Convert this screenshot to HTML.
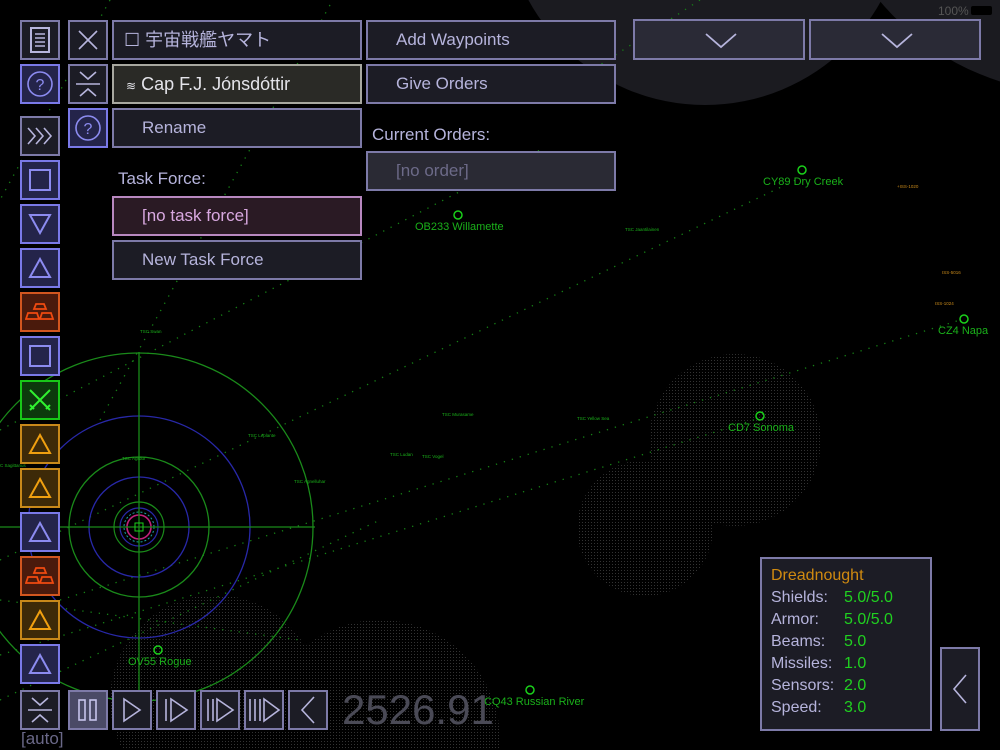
<!DOCTYPE html>
<html><head><meta charset="utf-8"><style>
*{margin:0;padding:0;box-sizing:border-box}
html,body{width:1000px;height:750px;overflow:hidden}
body{background:#000;position:relative;font-family:"Liberation Sans","Noto Sans CJK JP",sans-serif;color:#b6b4dc}
.b{position:absolute;border:2px solid #7d7aa8;background:#1c1c25;}
.sq{width:40px;height:40px;display:flex;align-items:center;justify-content:center}
.w{height:40px;font-size:17px;line-height:36px;padding-left:28px}
.o{border-color:#d2561f;background:#4a1a0c}
.y{border-color:#c8891a;background:#3d2a08}
.g{border-color:#18c818;background:#0c3a0c}
.p{border-color:#7a79e8;background:#24244a}
svg{display:block}
.lbl{position:absolute;font-size:17px}
</style></head><body>
<svg width="1000" height="750" style="position:absolute;left:0;top:0">
<defs><pattern id="d" width="3" height="3" patternUnits="userSpaceOnUse"><rect width="1" height="1" fill="#333"/></pattern></defs>
<circle cx="705" cy="-96" r="201" fill="#1b1b20"/>
<circle cx="1080" cy="-168" r="262" fill="#1b1b20"/>
<circle cx="735" cy="440" r="86" fill="url(#d)"/>
<circle cx="645" cy="528" r="68" fill="url(#d)"/>
<circle cx="215" cy="700" r="105" fill="url(#d)"/>
<circle cx="380" cy="740" r="120" fill="url(#d)"/>
<g stroke="#168016" stroke-width="1.3" stroke-dasharray="1.3 7" fill="none">
<line x1="0" y1="560" x2="800" y2="178"/>
<line x1="0" y1="430" x2="540" y2="150"/>
<line x1="60" y1="600" x2="960" y2="320"/>
<line x1="0" y1="655" x2="760" y2="418"/>
<line x1="0" y1="700" x2="380" y2="520"/>
<line x1="110" y1="0" x2="0" y2="200"/>
<line x1="330" y1="5" x2="100" y2="420"/>
<line x1="700" y1="0" x2="600" y2="65"/>
<line x1="0" y1="600" x2="300" y2="640"/>
</g>
<g fill="none">
<circle cx="139" cy="527" r="174" stroke="#1a8a1a" stroke-width="1.3"/>
<circle cx="139" cy="527" r="111" stroke="#2828a8" stroke-width="1.3"/>
<circle cx="139" cy="527" r="70" stroke="#1a8a1a" stroke-width="1.3"/>
<circle cx="139" cy="527" r="50" stroke="#2828a8" stroke-width="1.3"/>
<circle cx="139" cy="527" r="25" stroke="#1a8a1a" stroke-width="1.2"/>
<circle cx="139" cy="527" r="19" stroke="#2828a8" stroke-width="1.2"/>
<circle cx="139" cy="527" r="12" stroke="#c0207a" stroke-width="1.6"/>
<circle cx="139" cy="527" r="15" stroke="#18a0a0" stroke-width="1" stroke-dasharray="2 2"/>
<line x1="0" y1="527" x2="315" y2="527" stroke="#1a8a1a" stroke-width="1.3"/>
<line x1="139" y1="352" x2="139" y2="700" stroke="#1a8a1a" stroke-width="1.3"/>
<rect x="135" y="523" width="8" height="8" stroke="#1ad01a"/>
</g>
<g fill="none" stroke="#1ad01a" stroke-width="1.5">
<circle cx="458" cy="215" r="4"/><circle cx="802" cy="170" r="4"/><circle cx="964" cy="319" r="4"/><circle cx="760" cy="416" r="4"/><circle cx="158" cy="650" r="4"/><circle cx="530" cy="690" r="4"/>
</g>
<g fill="#1ab01a" font-family="Liberation Sans,sans-serif">
<text x="415" y="230" font-size="11">OB233 Willamette</text>
<text x="763" y="185" font-size="11">CY89 Dry Creek</text>
<text x="938" y="334" font-size="11">CZ4 Napa</text>
<text x="728" y="431" font-size="11">CD7 Sonoma</text>
<text x="128" y="665" font-size="11">OV55 Rogue</text>
<text x="484" y="705" font-size="11">CQ43 Russian River</text>
<g font-size="4.5"><text x="140" y="333">TSC Swan</text><text x="248" y="437">TSC Leplante</text><text x="122" y="460">TSC Agrdur</text><text x="294" y="483">TSC Agnelluhar</text><text x="442" y="416">TSC Murasame</text><text x="577" y="420">TSC Yellow Sea</text><text x="422" y="458">TSC Vogel</text><text x="625" y="231">TSC Jaantilainen</text><text x="0" y="467">C Sagittarius</text><text x="390" y="456">TSC Ludan</text></g>
</g>
<g fill="#c8891a" font-size="4.5"><text x="897" y="188">+ISS-1020</text><text x="942" y="274">ISS-5016</text><text x="935" y="305">ISS-1024</text></g>
</svg>
<div style="position:absolute;left:938px;top:4px;font-size:12px;color:#555">100%</div>
<div style="position:absolute;left:971px;top:6px;width:21px;height:9px;background:#000;border-radius:2px"></div>

<div class="b sq" style="left:20px;top:20px"><svg width="22" height="26"><rect x="2" y="1" width="18" height="24" fill="none" stroke="#b6b4dc" stroke-width="2"/><path d="M6 7h10M6 11h10M6 15h10M6 19h10" stroke="#b6b4dc" stroke-width="1.6"/></svg></div>
<div class="b sq p" style="left:20px;top:64px"><svg width="30" height="30"><circle cx="15" cy="15" r="12" fill="none" stroke="#8c8bf0" stroke-width="1.6"/><text x="15" y="21" text-anchor="middle" font-size="16" fill="#8c8bf0">?</text></svg></div>
<div class="b sq" style="left:20px;top:116px"><svg width="30" height="20"><path d="M3 2l7 8-7 8M11 2l7 8-7 8M19 2l7 8-7 8" fill="none" stroke="#b6b4dc" stroke-width="1.6"/></svg></div>
<div class="b sq p" style="left:20px;top:160px"><svg width="24" height="24"><rect x="2" y="2" width="20" height="20" fill="none" stroke="#8c8bf0" stroke-width="2"/></svg></div>
<div class="b sq p" style="left:20px;top:204px"><svg width="24" height="22"><path d="M2 2h20L12 20z" fill="none" stroke="#8c8bf0" stroke-width="2"/></svg></div>
<div class="b sq p" style="left:20px;top:248px"><svg width="24" height="22"><path d="M2 20h20L12 2z" fill="none" stroke="#8c8bf0" stroke-width="2"/></svg></div>
<div class="b sq o" style="left:20px;top:292px"><svg width="30" height="20"><path d="M11 2h8l2 5h-12zM3 11h9l2 6H1zM17 11h9l2 6H15z" fill="none" stroke="#f04a10" stroke-width="1.8"/></svg></div>
<div class="b sq p" style="left:20px;top:336px"><svg width="24" height="24"><rect x="2" y="2" width="20" height="20" fill="none" stroke="#8c8bf0" stroke-width="2"/></svg></div>
<div class="b sq g" style="left:20px;top:380px"><svg width="26" height="24"><path d="M3 2l20 20M23 2L3 22M3 17l4 4M23 17l-4 4" fill="none" stroke="#30f030" stroke-width="2"/></svg></div>
<div class="b sq y" style="left:20px;top:424px"><svg width="24" height="22"><path d="M2 20h20L12 2z" fill="none" stroke="#f0a010" stroke-width="2"/></svg></div>
<div class="b sq y" style="left:20px;top:468px"><svg width="24" height="22"><path d="M2 20h20L12 2z" fill="none" stroke="#f0a010" stroke-width="2"/></svg></div>
<div class="b sq p" style="left:20px;top:512px"><svg width="24" height="22"><path d="M2 20h20L12 2z" fill="none" stroke="#8c8bf0" stroke-width="2"/></svg></div>
<div class="b sq o" style="left:20px;top:556px"><svg width="30" height="20"><path d="M11 2h8l2 5h-12zM3 11h9l2 6H1zM17 11h9l2 6H15z" fill="none" stroke="#f04a10" stroke-width="1.8"/></svg></div>
<div class="b sq y" style="left:20px;top:600px"><svg width="24" height="22"><path d="M2 20h20L12 2z" fill="none" stroke="#f0a010" stroke-width="2"/></svg></div>
<div class="b sq p" style="left:20px;top:644px"><svg width="24" height="22"><path d="M2 20h20L12 2z" fill="none" stroke="#8c8bf0" stroke-width="2"/></svg></div>
<div class="b sq" style="left:20px;top:690px"><svg width="26" height="28"><path d="M5 2l8 7 8-7M1 14h24M5 26l8-7 8 7" fill="none" stroke="#b6b4dc" stroke-width="1.6"/></svg></div>
<div style="position:absolute;left:21px;top:730px;font-size:17px;line-height:18px;color:#6a6888">[auto]</div>

<div class="b sq" style="left:68px;top:20px"><svg width="22" height="22"><path d="M2 2l18 18M20 2L2 20" stroke="#b6b4dc" stroke-width="1.6"/></svg></div>
<div class="b sq" style="left:68px;top:64px"><svg width="26" height="28"><path d="M5 2l8 7 8-7M1 14h24M5 26l8-7 8 7" fill="none" stroke="#b6b4dc" stroke-width="1.6"/></svg></div>
<div class="b sq p" style="left:68px;top:108px"><svg width="30" height="30"><circle cx="15" cy="15" r="12" fill="none" stroke="#8c8bf0" stroke-width="1.6"/><text x="15" y="21" text-anchor="middle" font-size="16" fill="#8c8bf0">?</text></svg></div>

<div class="b w" style="left:112px;top:20px;width:250px;padding-left:10px;font-size:18px">☐ 宇宙戦艦ヤマト</div>
<div class="b w" style="left:112px;top:64px;width:250px;padding-left:12px;border-color:#a8a8a0;background:#2a2a26;color:#e4e4ea;font-size:18px"><span style="font-size:12px">≋</span> Cap F.J. Jónsdóttir</div>
<div class="b w" style="left:112px;top:108px;width:250px">Rename</div>
<div class="lbl" style="left:118px;top:169px">Task Force:</div>
<div class="b w" style="left:112px;top:196px;width:250px;border-color:#b888c0;background:#2a1a24;color:#d8a8e0">[no task force]</div>
<div class="b w" style="left:112px;top:240px;width:250px">New Task Force</div>

<div class="b w" style="left:366px;top:20px;width:250px">Add Waypoints</div>
<div class="b w" style="left:366px;top:64px;width:250px">Give Orders</div>
<div class="lbl" style="left:372px;top:125px">Current Orders:</div>
<div class="b w" style="left:366px;top:151px;width:250px;background:#2a2a34;color:#6c6a88">[no order]</div>

<div class="b" style="left:633px;top:19px;width:172px;height:41px;background:#2a2a36"><svg width="168" height="37"><path d="M71 13l15 13 15-13" fill="none" stroke="#b6b4dc" stroke-width="1.8"/></svg></div>
<div class="b" style="left:809px;top:19px;width:172px;height:41px;background:#2a2a36"><svg width="168" height="37"><path d="M71 13l15 13 15-13" fill="none" stroke="#b6b4dc" stroke-width="1.8"/></svg></div>

<div class="b sq" style="left:68px;top:690px;background:#4a4a66"><svg width="22" height="24"><rect x="2" y="2" width="6" height="20" fill="none" stroke="#c6c4ec" stroke-width="1.6"/><rect x="13" y="2" width="6" height="20" fill="none" stroke="#c6c4ec" stroke-width="1.6"/></svg></div>
<div class="b sq" style="left:112px;top:690px"><svg width="22" height="26"><path d="M3 2l16 11L3 24z" fill="none" stroke="#b6b4dc" stroke-width="1.6"/></svg></div>
<div class="b sq" style="left:156px;top:690px"><svg width="26" height="26"><path d="M3 2v22M8 2l16 11L8 24z" fill="none" stroke="#b6b4dc" stroke-width="1.6"/></svg></div>
<div class="b sq" style="left:200px;top:690px"><svg width="30" height="26"><path d="M3 2v22M8 2v22M12 2l16 11-16 11z" fill="none" stroke="#b6b4dc" stroke-width="1.6"/></svg></div>
<div class="b sq" style="left:244px;top:690px"><svg width="34" height="26"><path d="M3 2v22M8 2v22M13 2v22M17 2l15 11-15 11z" fill="none" stroke="#b6b4dc" stroke-width="1.6"/></svg></div>
<div class="b sq" style="left:288px;top:690px"><svg width="20" height="30"><path d="M16 2L4 15l12 13" fill="none" stroke="#b6b4dc" stroke-width="1.6"/></svg></div>
<div style="position:absolute;left:342px;top:686px;font-size:42px;line-height:48px;color:#4a4a56">2526.91</div>

<div class="b" style="left:760px;top:557px;width:172px;height:174px;background:#1c1c25;font-size:16px;line-height:22px;padding:6px 0 0 9px">
<div style="color:#d08a10">Dreadnought</div>
<div>Shields:<span style="position:absolute;left:82px;color:#20d020">5.0/5.0</span></div>
<div>Armor:<span style="position:absolute;left:82px;color:#20d020">5.0/5.0</span></div>
<div>Beams:<span style="position:absolute;left:82px;color:#20d020">5.0</span></div>
<div>Missiles:<span style="position:absolute;left:82px;color:#20d020">1.0</span></div>
<div>Sensors:<span style="position:absolute;left:82px;color:#20d020">2.0</span></div>
<div>Speed:<span style="position:absolute;left:82px;color:#20d020">3.0</span></div>
</div>
<div class="b" style="left:940px;top:647px;width:40px;height:84px;background:#1c1c25"><svg width="36" height="80"><path d="M24 26L12 40l12 14" fill="none" stroke="#b6b4dc" stroke-width="1.6"/></svg></div>
</body></html>
